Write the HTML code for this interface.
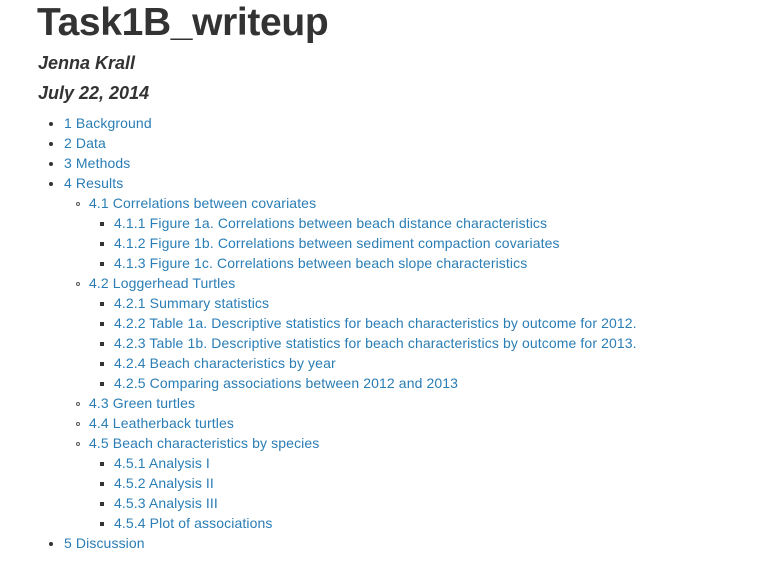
<!DOCTYPE html>
<html><head><meta charset="utf-8"><style>
body{margin:0;background:#fff;font-family:"Liberation Sans",Arial,sans-serif;color:#333;width:782px;height:561px;overflow:hidden;position:relative}
h1{position:absolute;left:37px;top:-2px;margin:0;font-size:39px;font-weight:bold;letter-spacing:-0.35px;line-height:50px}
.h{position:absolute;left:38px;margin:0;font-size:18px;font-weight:bold;font-style:italic;line-height:24px}
.l{position:absolute;font-size:14px;line-height:20px;color:#2a7db5;white-space:nowrap;letter-spacing:0.11px}
.b{position:absolute;width:4px;height:4px;background:#333;border-radius:50%}
.c{position:absolute;width:4px;height:4px;border:1px solid #555;border-radius:50%;box-sizing:border-box}
.s{position:absolute;width:4px;height:4px;background:#333}
</style></head><body>
<h1>Task1B_writeup</h1>
<div class="h" style="top:51px">Jenna Krall</div>
<div class="h" style="top:81px">July 22, 2014</div>
<div id="list"></div>
<script>
var items=[[1,"1 Background"],[1,"2 Data"],[1,"3 Methods"],[1,"4 Results"],[2,"4.1 Correlations between covariates"],[3,"4.1.1 Figure 1a. Correlations between beach distance characteristics"],[3,"4.1.2 Figure 1b. Correlations between sediment compaction covariates"],[3,"4.1.3 Figure 1c. Correlations between beach slope characteristics"],[2,"4.2 Loggerhead Turtles"],[3,"4.2.1 Summary statistics"],[3,"4.2.2 Table 1a. Descriptive statistics for beach characteristics by outcome for 2012."],[3,"4.2.3 Table 1b. Descriptive statistics for beach characteristics by outcome for 2013."],[3,"4.2.4 Beach characteristics by year"],[3,"4.2.5 Comparing associations between 2012 and 2013"],[2,"4.3 Green turtles"],[2,"4.4 Leatherback turtles"],[2,"4.5 Beach characteristics by species"],[3,"4.5.1 Analysis I"],[3,"4.5.2 Analysis II"],[3,"4.5.3 Analysis III"],[3,"4.5.4 Plot of associations"],[1,"5 Discussion"]];
var h="";
items.forEach(function(it,i){var y=113+i*20;var tx=[0,64,89,114][it[0]];var bx=[0,49,76,100][it[0]];var cl=["","b","c","s"][it[0]];
h+='<div class="'+cl+'" style="left:'+bx+'px;top:'+(y+9)+'px"></div><div class="l" style="left:'+tx+'px;top:'+y+'px">'+it[1]+'</div>';});
document.getElementById("list").innerHTML=h;
</script>
</body></html>
